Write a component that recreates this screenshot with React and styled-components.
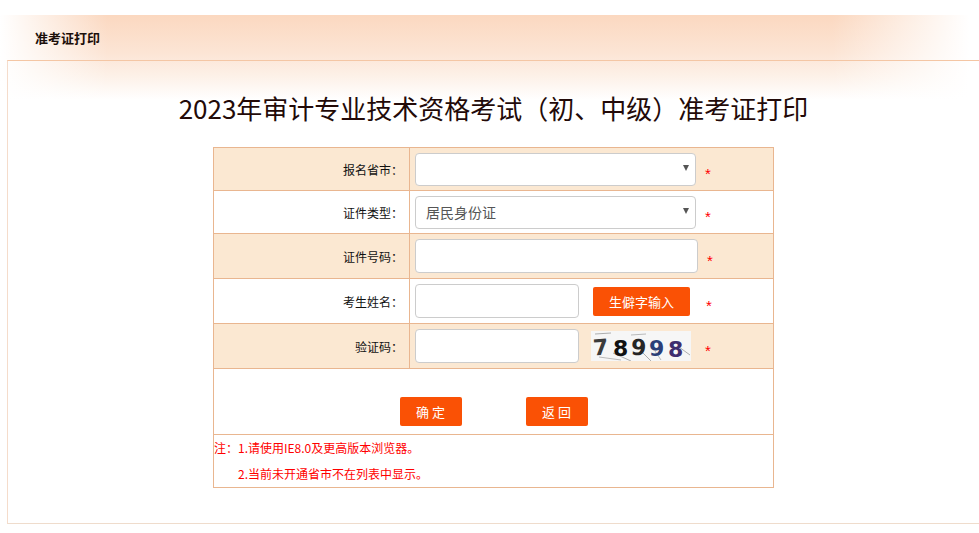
import React from "react";
import styled, { createGlobalStyle } from "styled-components";

const GlobalStyle = createGlobalStyle`
  html, body {
    margin: 0;
    padding: 0;
    background: #fff;
    overflow: hidden;
  }
  body {
    font-family: "Noto Sans CJK SC", "Liberation Sans", sans-serif;
    color: #000;
  }
`;

const rows = [
  { label: "报名省市：", kind: "select", value: "", shade: true, h: 43 },
  { label: "证件类型：", kind: "select", value: "居民身份证", shade: false, h: 43 },
  { label: "证件号码：", kind: "input", shade: true, h: 45 },
  { label: "考生姓名：", kind: "name", shade: false, h: 45 },
  { label: "验证码：", kind: "captcha", shade: true, h: 45 },
];

export default function App() {
  return (
    <Page>
      <GlobalStyle />
      <TopBar>
        <BarTitle>准考证打印</BarTitle>
      </TopBar>
      <Panel>
        <Heading>2023年审计专业技术资格考试（初、中级）准考证打印</Heading>
        <FormTable>
          {rows.map((r) => (
            <Row key={r.label} $shade={r.shade} $h={r.h}>
              <LabelCell>{r.label}</LabelCell>
              <FieldCell>{renderField(r)}</FieldCell>
            </Row>
          ))}
          <Row $h={66}>
            <ButtonCell>
              <ActionButton>确 定</ActionButton>
              <ActionButton>返 回</ActionButton>
            </ButtonCell>
          </Row>
          <Row $h={53}>
            <Notes>
              <NoteLine>注：1.请使用IE8.0及更高版本浏览器。</NoteLine>
              <NoteLine $indent>2.当前未开通省市不在列表中显示。</NoteLine>
            </Notes>
          </Row>
        </FormTable>
      </Panel>
    </Page>
  );
}

function renderField(r) {
  if (r.kind === "select") {
    return (
      <>
        <SelectWrap>
          <Select defaultValue={r.value}>
            <option value={r.value}>{r.value}</option>
          </Select>
          <Caret />
        </SelectWrap>
        <Star $ml={9}>*</Star>
      </>
    );
  }
  if (r.kind === "input") {
    return (
      <>
        <TextInput $w={283} />
        <Star $ml={9}>*</Star>
      </>
    );
  }
  if (r.kind === "name") {
    return (
      <>
        <TextInput $w={164} />
        <RareButton>生僻字输入</RareButton>
        <Star $ml={16}>*</Star>
      </>
    );
  }
  return (
    <>
      <TextInput $w={164} />
      <Captcha />
      <Star $ml={14}>*</Star>
    </>
  );
}

function Captcha() {
  return (
    <CaptchaBox>
      <svg width="100" height="30" viewBox="0 0 100 30">
        <rect width="100" height="30" fill="#f6f6f6" />
        <path d="M4 3 L20 2" stroke="#9a9a9a" strokeWidth="0.8" />
        <path d="M40 4 L55 3" stroke="#aaa" strokeWidth="0.8" />
        <path d="M22 22 L40 30" stroke="#999" strokeWidth="0.8" />
        <path d="M8 26 L30 29" stroke="#aaa" strokeWidth="0.8" />
        <path d="M52 22 L60 30" stroke="#999" strokeWidth="0.8" />
        <path d="M64 20 L70 29" stroke="#aaa" strokeWidth="0.8" />
        <path d="M88 16 L99 24" stroke="#999" strokeWidth="0.8" />
        <CaptchaDigit x="2" y="24" fill="#3b3b3b" transform="rotate(-4 10 16)">7</CaptchaDigit>
        <CaptchaDigit x="22" y="25" fill="#111">8</CaptchaDigit>
        <CaptchaDigit x="40" y="24" fill="#262626" transform="rotate(4 47 16)">9</CaptchaDigit>
        <CaptchaDigit x="58" y="25" fill="#2b3f78">9</CaptchaDigit>
        <CaptchaDigit x="77" y="26" fill="#3e2d6e">8</CaptchaDigit>
      </svg>
    </CaptchaBox>
  );
}

const Page = styled.div`
  margin-top: 15px;
  background:
    linear-gradient(to right, #fff 0%, rgba(255,255,255,0) 11%, rgba(255,255,255,0) 85%, #fff 99%),
    linear-gradient(to bottom, #fbd8c0 0%, #fce5d5 45%, #fdf1e8 72%, #fff 100%);
  background-size: 100% 85px, 100% 85px;
  background-repeat: no-repeat;
`;

const TopBar = styled.div`
  height: 45px;
  display: flex;
  align-items: center;
  padding-left: 35px;
`;

const BarTitle = styled.span`
  font-size: 13px;
  font-weight: bold;
  color: #1c0f0a;
`;

const Panel = styled.div`
  margin-left: 7px;
  height: 464px;
  box-sizing: border-box;
  border-left: 1px solid #f5dccb;
  border-bottom: 1px solid #efdccc;
  border-top: 1px solid #f4c6a4;
  padding-top: 27px;
`;

const Heading = styled.h1`
  margin: 0 0 20px;
  font-size: 26px;
  line-height: 39px;
  font-weight: normal;
  text-align: center;
  color: #230a08;
`;

const FormTable = styled.div`
  width: 561px;
  margin: 0 auto;
  box-sizing: border-box;
  border: 1px solid #e9b690;
  border-bottom: none;
`;

const Row = styled.div`
  display: flex;
  height: ${(p) => p.$h}px;
  box-sizing: border-box;
  border-bottom: 1px solid #e9b690;
  background: ${(p) => (p.$shade ? "#fbe8d2" : "#fff")};
`;

const LabelCell = styled.div`
  width: 196px;
  box-sizing: border-box;
  border-right: 1px solid #e9b690;
  display: flex;
  align-items: center;
  justify-content: flex-end;
  padding-right: 6px;
  font-size: 12px;
  color: #111;
`;

const FieldCell = styled.div`
  flex: 1;
  display: flex;
  align-items: center;
  padding-left: 5px;
`;

const SelectWrap = styled.div`
  display: grid;
  align-items: center;
  width: 281px;
  height: 33px;
  & > * {
    grid-area: 1 / 1;
  }
`;

const Select = styled.select`
  appearance: none;
  width: 100%;
  height: 100%;
  box-sizing: border-box;
  border: 1px solid #cccccc;
  border-radius: 4px;
  background: #fff;
  padding: 0 0 0 10px;
  font-family: inherit;
  font-size: 14px;
  color: #555;
  outline: none;
`;

const Caret = styled.span`
  justify-self: end;
  margin-right: 7px;
  width: 0;
  height: 0;
  border-left: 3.5px solid transparent;
  border-right: 3.5px solid transparent;
  border-top: 6px solid #555;
  margin-top: -3px;
  pointer-events: none;
`;

const TextInput = styled.input`
  width: ${(p) => p.$w}px;
  height: 34px;
  box-sizing: border-box;
  border: 1px solid #cccccc;
  border-radius: 4px;
  background: #fff;
  outline: none;
  padding: 0 8px;
  margin: 0;
`;

const Star = styled.span`
  margin-left: ${(p) => p.$ml}px;
  color: #f00;
  font-family: "Liberation Sans", sans-serif;
  font-size: 15px;
  padding-top: 8px;
`;

const RareButton = styled.button`
  margin-left: 14px;
  width: 97px;
  height: 29px;
  border: none;
  border-radius: 2px;
  background: #fa5105;
  color: #fff;
  font-family: inherit;
  font-size: 13px;
  padding: 0;
`;

const CaptchaBox = styled.div`
  margin-left: 12px;
  width: 100px;
  height: 30px;
  display: flex;
`;

const CaptchaDigit = styled.text`
  font-family: "DejaVu Sans", sans-serif;
  font-weight: bold;
  font-size: 22px;
`;

const ButtonCell = styled.div`
  flex: 1;
  display: flex;
  justify-content: center;
  align-items: flex-start;
  gap: 64px;
  padding-top: 28px;
`;

const ActionButton = styled.button`
  width: 62px;
  height: 29px;
  border: none;
  border-radius: 2px;
  background: #fa5105;
  color: #fff;
  font-family: inherit;
  font-size: 13px;
  padding: 0;
`;

const Notes = styled.div`
  flex: 1;
  display: flex;
  flex-direction: column;
`;

const NoteLine = styled.div`
  font-size: 12px;
  line-height: 26px;
  color: #f00;
  padding-left: ${(p) => (p.$indent ? "24px" : "0")};
`;
